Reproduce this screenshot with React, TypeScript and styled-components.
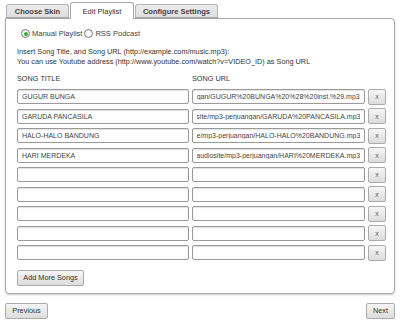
import React, { useEffect, useRef } from "react";
import styled, { createGlobalStyle, css } from "styled-components";

const GlobalStyle = createGlobalStyle`
  body {
    margin: 0;
    background: #fff;
    font-family: "Liberation Sans", Arial, sans-serif;
    font-size: 8px;
    color: #333;
  }
`;

const Page = styled.div`
  width: 400px;
  padding: 2px 5px 0 5px;
  box-sizing: border-box;
`;

const TabBar = styled.div`
  display: flex;
  align-items: flex-end;
  gap: 1px;
  padding-left: 1px;
  height: 17px;
  margin-bottom: -1px;
  position: relative;
  z-index: 1;
`;

const Tab = styled.div<{ $active?: boolean; $w: number }>`
  width: ${(p) => p.$w}px;
  box-sizing: border-box;
  display: flex;
  align-items: center;
  justify-content: center;
  border: 1px solid #b4b4b4;
  border-bottom: none;
  border-radius: 3px 3px 0 0;
  font-size: 7.5px;
  font-weight: bold;
  color: #444;
  ${(p) =>
    p.$active
      ? css`
          height: 17px;
          background: #fff;
          border-color: #a8a8a8;
          font-weight: normal;
          color: #333;
        `
      : css`
          height: 14px;
          margin-bottom: 1px;
          background: linear-gradient(#ececec, #dedede);
          border-bottom: 1px solid #a8a8a8;
        `}
`;

const Panel = styled.div`
  border: 1px solid #a8a8a8;
  border-radius: 0 4px 4px 4px;
  box-shadow: 0 1px 2px rgba(0, 0, 0, 0.22);
  padding: 9px 11px 7px 11px;
`;

const RadioRow = styled.div`
  display: flex;
  align-items: center;
  height: 11px;
  padding-left: 4px;
  margin-bottom: 8px;
`;

const RadioLabel = styled.label`
  display: flex;
  align-items: center;
  gap: 2px;
  margin-right: 2px;
  font-size: 7.5px;
  color: #444;
`;

const RadioDot = styled.span<{ $on?: boolean }>`
  width: 9px;
  height: 9px;
  box-sizing: border-box;
  border-radius: 50%;
  border: 1px solid #7d7d7d;
  background: radial-gradient(circle, #fff 40%, #e2e2e2 100%);
  display: flex;
  align-items: center;
  justify-content: center;
  &::after {
    content: "";
    width: 4px;
    height: 4px;
    border-radius: 50%;
    background: ${(p) => (p.$on ? "#2fae2f" : "transparent")};
  }
`;

const Info = styled.p`
  margin: 0;
  line-height: 10px;
  font-size: 7.3px;
  color: #333;
`;

const Grid = styled.div`
  display: grid;
  grid-template-columns: 172px 173px 18px;
  column-gap: 3px;
  row-gap: 3.5px;
  align-items: center;
`;

const ColHead = styled.div`
  height: 11px;
  line-height: 11px;
  margin-top: 6px;
  margin-bottom: 1px;
  font-size: 7.3px;
  color: #333;
`;

const Field = styled.input`
  height: 15px;
  box-sizing: border-box;
  width: 100%;
  border: 1px solid #9a9a9a;
  border-radius: 2px;
  box-shadow: inset 0 1px 1px rgba(0, 0, 0, 0.12);
  padding: 0 4px;
  font-family: "Liberation Sans", Arial, sans-serif;
  font-size: 7px;
  color: #444;
  background: #fff;
  outline: none;
`;

const Button = styled.button`
  height: 16px;
  box-sizing: border-box;
  border: 1px solid #ababab;
  border-radius: 2px;
  background: linear-gradient(#f6f6f6, #dcdcdc);
  font-family: "Liberation Sans", Arial, sans-serif;
  font-size: 7.3px;
  color: #333;
  padding: 0;
  white-space: nowrap;
  cursor: pointer;
`;

const RemoveButton = styled(Button)`
  width: 18px;
  font-size: 7px;
  color: #666;
`;

const AddButton = styled(Button)`
  display: block;
  margin-top: 9px;
  width: 67px;
`;

const Footer = styled.div`
  display: flex;
  justify-content: space-between;
  margin-top: 9px;
`;

const NavButton = styled(Button)<{ $w: number }>`
  width: ${(p) => p.$w}px;
`;

const songs = [
  {
    title: "GUGUR BUNGA",
    url: "http://www.audiosite.com/mp3-perjuangan/GUGUR%20BUNGA%20%28%20inst.%29.mp3",
  },
  {
    title: "GARUDA PANCASILA",
    url: "http://www.audiosite/mp3-perjuangan/GARUDA%20PANCASILA.mp3",
  },
  {
    title: "HALO-HALO BANDUNG",
    url: "http://www.audiosite.com/audiosite/mp3-perjuangan/HALO-HALO%20BANDUNG.mp3",
  },
  {
    title: "HARI MERDEKA",
    url: "http://www.audiosite/mp3-perjuangan/HARI%20MERDEKA.mp3",
  },
  { title: "", url: "" },
  { title: "", url: "" },
  { title: "", url: "" },
  { title: "", url: "" },
  { title: "", url: "" },
];

// url fields show the end of the address, like after typing
const UrlField = ({ value }: { value: string }) => {
  const ref = useRef<HTMLInputElement>(null);
  useEffect(() => {
    if (ref.current) ref.current.scrollLeft = ref.current.scrollWidth;
  }, [value]);
  return <Field ref={ref} defaultValue={value} />;
};

export default function App() {
  return (
    <Page>
      <GlobalStyle />
      <TabBar>
        <Tab $w={63}>Choose Skin</Tab>
        <Tab $w={64} $active>
          Edit Playlist
        </Tab>
        <Tab $w={83}>Configure Settings</Tab>
      </TabBar>
      <Panel>
        <RadioRow>
          <RadioLabel>
            <RadioDot $on />
            Manual Playlist
          </RadioLabel>
          <RadioLabel>
            <RadioDot />
            RSS Podcast
          </RadioLabel>
        </RadioRow>
        <Info>Insert Song Title, and Song URL (http://example.com/music.mp3):</Info>
        <Info>
          You can use Youtube address (http://www.youtube.com/watch?v=VIDEO_ID) as Song URL
        </Info>
        <Grid>
          <ColHead>SONG TITLE</ColHead>
          <ColHead>SONG URL</ColHead>
          <div />
          {songs.map((s, i) => (
            <React.Fragment key={i}>
              <Field defaultValue={s.title} />
              <UrlField value={s.url} />
              <RemoveButton>x</RemoveButton>
            </React.Fragment>
          ))}
        </Grid>
        <AddButton>Add More Songs</AddButton>
      </Panel>
      <Footer>
        <NavButton $w={43}>Previous</NavButton>
        <NavButton $w={29}>Next</NavButton>
      </Footer>
    </Page>
  );
}
